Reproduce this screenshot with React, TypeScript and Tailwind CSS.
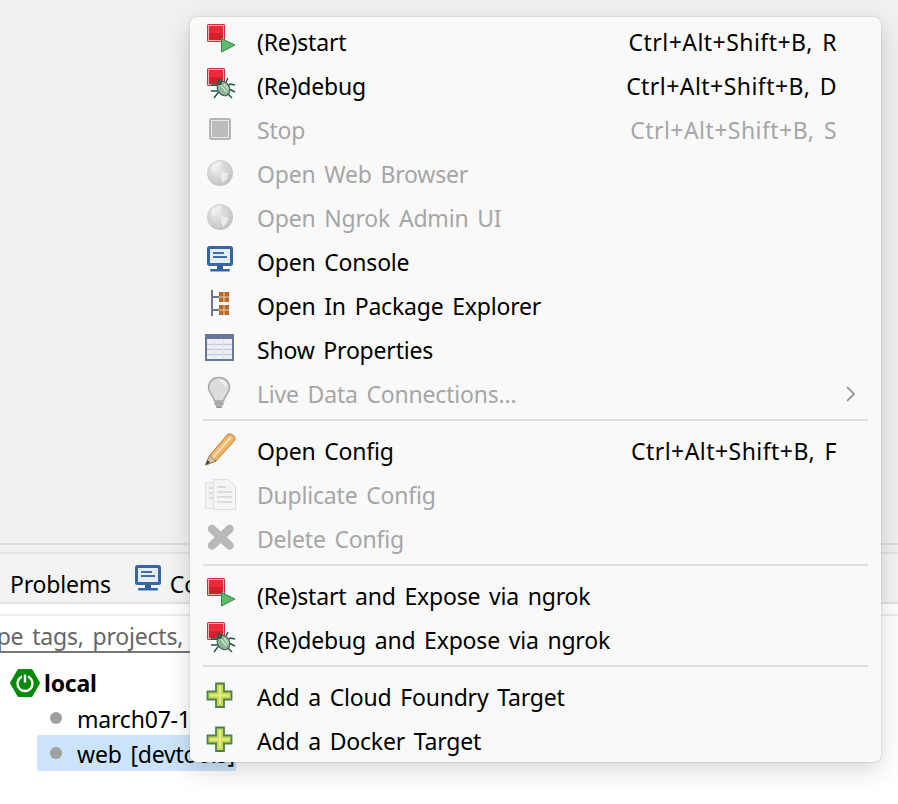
import React from 'react';

const RedSquare = () => (
  <g>
    <rect x="4" y="4" width="18" height="18" rx="1.5" fill="#c8323c" />
    <rect x="5" y="5" width="16" height="16" fill="#f4b0b4" />
    <rect x="6" y="6" width="14" height="14" fill="#ee2a38" />
    <rect x="6" y="13" width="14" height="7" fill="#d2202e" />
  </g>
);

const RestartIcon = () => (
  <svg width="36" height="44" viewBox="0 0 36 44">
    <RedSquare />
    <path d="M18.5 18.5 L32 25 L18.5 32 Z" fill="#62b96b" stroke="#2f8a4a" strokeLinejoin="round" />
  </svg>
);

const DebugIcon = () => (
  <svg width="36" height="44" viewBox="0 0 36 44">
    <RedSquare />
    <g stroke="#23504a" strokeWidth="1.4" fill="none">
      <path d="M15 15 L18 19 M25 14 L23 18" />
      <path d="M8 21 L14 21 L16 23 M8 27 L14 27 L16 25 M11 34 L14 30 L16 28" />
      <path d="M32 21 L27 20 L25 22 M32 28 L28 26 L25 25 M29 34 L26 31 L24 28" />
    </g>
    <ellipse cx="20.5" cy="24.5" rx="6" ry="7.5" transform="rotate(-30 20.5 24.5)" fill="#8fb592" stroke="#2f5f50" />
    <path d="M17.5 21 L23.5 28 M21 20 L25.5 25.5" stroke="#d5e6d2" strokeWidth="1.2" />
    <circle cx="16.5" cy="18.5" r="2.6" fill="#2f5f50" />
  </svg>
);

const StopIcon = () => (
  <svg width="36" height="44" viewBox="0 0 36 44">
    <rect x="6" y="10" width="22" height="22" rx="2.5" fill="#b5b5b5" />
    <rect x="8" y="12" width="18" height="18" rx="1" fill="#e8e8e8" />
    <rect x="9" y="13" width="16" height="16" fill="#bcbcbc" />
  </svg>
);

const GlobeIcon = ({ id }: { id: string }) => (
  <svg width="36" height="44" viewBox="0 0 36 44">
    <defs>
      <radialGradient id={id} cx="0.4" cy="0.35" r="0.75">
        <stop offset="0" stopColor="#ececec" />
        <stop offset="1" stopColor="#bcbcbc" />
      </radialGradient>
    </defs>
    <circle cx="17" cy="21" r="13" fill={`url(#${id})`} />
    <path d="M8 15 C11 10 15 9 19 10 L17 14 L12 15 L13 19 L9 20 Z M18 20 L25 21 L24 27 L20 31 L18 26 Z" fill="#f1f1f1" opacity="0.8" />
  </svg>
);

const ConsoleIcon = () => (
  <svg width="36" height="44" viewBox="0 0 36 44">
    <rect x="4" y="6" width="26" height="20" rx="2.5" fill="#3667a8" />
    <rect x="7" y="9" width="20" height="14" fill="#e6edf4" />
    <rect x="10" y="12" width="11" height="2" fill="#3c6fae" />
    <rect x="10" y="16" width="14" height="2" fill="#3c6fae" />
    <rect x="14" y="26" width="6" height="3" fill="#2f5c98" />
    <rect x="7" y="29" width="20" height="2.5" rx="1" fill="#3667a8" />
  </svg>
);

const PackageIcon = () => (
  <svg width="36" height="44" viewBox="0 0 36 44">
    <path d="M9 6 V32 M9 13 H16 M9 26 H16" stroke="#6b7688" strokeWidth="2" fill="none" />
    <rect x="16" y="8" width="10" height="10" fill="#b5672c" />
    <rect x="16" y="21" width="10" height="10" fill="#b5672c" />
    <path d="M21 8 V18 M16 13 H26 M21 21 V31 M16 26 H26" stroke="#eed3b0" strokeWidth="1" />
  </svg>
);

const TableIcon = () => (
  <svg width="36" height="44" viewBox="0 0 36 44">
    <rect x="3" y="7" width="27" height="25" fill="#eef0f5" stroke="#66789c" strokeWidth="2" />
    <rect x="3" y="7" width="27" height="4" fill="#66789c" />
    <path d="M4 16.5 H29 M4 21.5 H29 M4 26.5 H29" stroke="#c3cad9" strokeWidth="1.5" />
    <path d="M11.5 11 V31 M20.5 11 V31" stroke="#dfe2ea" strokeWidth="1.5" />
  </svg>
);

const BulbIcon = () => (
  <svg width="36" height="44" viewBox="0 0 36 44">
    <path d="M16 5.5 C9.5 5.5 5.5 10 5.5 15.5 C5.5 21 10.5 23.5 11.5 29 H20.5 C21.5 23.5 26.5 21 26.5 15.5 C26.5 10 22.5 5.5 16 5.5 Z" fill="#dcdcdc" stroke="#a8a8a8" strokeWidth="1.5" />
    <path d="M17 8.5 C20 9 22.5 11.5 23 14.5" stroke="#f5f5f5" strokeWidth="2" fill="none" />
    <rect x="11.5" y="29.5" width="9" height="4" rx="1" fill="#a8a8a8" />
    <rect x="13" y="33.5" width="6" height="2.5" rx="1" fill="#9a9a9a" />
  </svg>
);

const PencilIcon = () => (
  <svg width="36" height="44" viewBox="0 0 36 44">
    <path d="M7 26 L25 5 Q28 4.5 30.5 6.5 Q32.5 8.5 32 11 L13 32 L2.5 36 Z" fill="#f0b469" stroke="#bd7a30" />
    <path d="M10 28.5 L28 8" stroke="#fbdca8" strokeWidth="2.5" />
    <path d="M6.5 26.5 L13 32 L2.5 36 Z" fill="#d8c6a8" stroke="#8d7760" strokeWidth="0.8" />
    <path d="M4.5 31 L7 33.5 L2.5 36 Z" fill="#443c36" />
  </svg>
);

const DuplicateIcon = () => (
  <svg width="36" height="44" viewBox="0 0 36 44">
    <rect x="2.5" y="9.5" width="14" height="26" fill="#f3f3f3" stroke="#e2e2e2" />
    <path d="M10.5 6.5 H25 L32.5 13 V36.5 H10.5 Z" fill="#f5f5f5" stroke="#dfdfdf" />
    <path d="M6 15 H10 M6 20 H10 M6 25 H10 M14 14 H23 M14 19 H29 M14 24 H29 M14 29 H29" stroke="#dcdcdc" strokeWidth="2" />
  </svg>
);

const DeleteIcon = () => (
  <svg width="36" height="44" viewBox="0 0 36 44">
    <path d="M9 12 L26.5 28.5 M26.5 12 L9 28.5" stroke="#b9b9b9" strokeWidth="8.5" strokeLinecap="round" />
  </svg>
);

const PlusIcon = () => (
  <svg width="36" height="44" viewBox="0 0 36 44">
    <path d="M13 8.5 H21 V16.5 H28.5 V24.5 H21 V32 H13 V24.5 H4.5 V16.5 H13 Z" fill="#c7d94f" stroke="#4c8054" strokeWidth="1.8" />
    <path d="M17 11 V29 M7 20.5 H26" stroke="#e3ec90" strokeWidth="2" />
  </svg>
);

type Row = {
  icon: React.ReactNode;
  label: string;
  shortcut?: string;
  disabled?: boolean;
  submenu?: boolean;
};

const GROUPS: Row[][] = [
  [
    { icon: <RestartIcon />, label: '(Re)start', shortcut: 'Ctrl+Alt+Shift+B, R' },
    { icon: <DebugIcon />, label: '(Re)debug', shortcut: 'Ctrl+Alt+Shift+B, D' },
    { icon: <StopIcon />, label: 'Stop', shortcut: 'Ctrl+Alt+Shift+B, S', disabled: true },
    { icon: <GlobeIcon id="globe-a" />, label: 'Open Web Browser', disabled: true },
    { icon: <GlobeIcon id="globe-b" />, label: 'Open Ngrok Admin UI', disabled: true },
    { icon: <ConsoleIcon />, label: 'Open Console' },
    { icon: <PackageIcon />, label: 'Open In Package Explorer' },
    { icon: <TableIcon />, label: 'Show Properties' },
    { icon: <BulbIcon />, label: 'Live Data Connections...', disabled: true, submenu: true },
  ],
  [
    { icon: <PencilIcon />, label: 'Open Config', shortcut: 'Ctrl+Alt+Shift+B, F' },
    { icon: <DuplicateIcon />, label: 'Duplicate Config', disabled: true },
    { icon: <DeleteIcon />, label: 'Delete Config', disabled: true },
  ],
  [
    { icon: <RestartIcon />, label: '(Re)start and Expose via ngrok' },
    { icon: <DebugIcon />, label: '(Re)debug and Expose via ngrok' },
  ],
  [
    { icon: <PlusIcon />, label: 'Add a Cloud Foundry Target' },
    { icon: <PlusIcon />, label: 'Add a Docker Target' },
  ],
];

const MenuRow = ({ row }: { row: Row }) => (
  <div className={`flex h-[44px] items-center ${row.disabled ? 'text-[#a6a6a6]' : 'text-black'}`}>
    <div className="ml-[13px] h-[44px] w-[54px] shrink-0">{row.icon}</div>
    <span className="flex-1">{row.label}</span>
    {row.shortcut && <span className="mr-[44px] tracking-[0.45px]">{row.shortcut}</span>}
    {row.submenu && (
      <svg className="mr-[26px]" width="9" height="16" viewBox="0 0 9 16">
        <path d="M1 1 L8 8 L1 15" fill="none" stroke="#8a8a8a" strokeWidth="1.6" />
      </svg>
    )}
  </div>
);

export default function App() {
  return (
    <div className="relative h-[804px] w-[898px] overflow-hidden bg-white text-[23px] leading-none tracking-[-0.2px] [font-family:'Noto_Sans',sans-serif] [word-spacing:3px]">
      {/* view behind the menu */}
      <div className="h-[545px] border-b-2 border-[#dcdcdc] bg-[#f0f0f0]" />
      <div className="h-[7px] bg-[#f0f0f0]" />
      <div className="flex h-[52px] items-center border-y-2 border-[#e2e2e2] bg-[#f3f3f3] pl-[10px] pt-[12px]">
        <span>Problems</span>
        <div className="ml-[20px] h-[44px] w-[36px] shrink-0 -translate-y-[3px]">
          <ConsoleIcon />
        </div>
        <span className="ml-[3px]">Console</span>
      </div>
      <div className="mt-[10px] border-t-2 border-[#ececec]" />
      <div className="flex h-[37px] w-[200px] items-center overflow-hidden whitespace-nowrap border-b-2 border-[#777] pt-[5px] text-[#666]">
        <span className="-ml-[27px]">Type tags, projects, or working state</span>
      </div>
      <div className="flex h-[48px] items-center pl-[8px] pt-[12px] font-bold">
        <svg width="34" height="34" viewBox="0 0 34 34">
          <path d="M10.5 4 H23.5 L31 17 L23.5 30 H10.5 L3 17 Z" fill="#078a07" stroke="#078a07" strokeWidth="2" strokeLinejoin="round" />
          <circle cx="17" cy="17.5" r="7.5" fill="none" stroke="#fff" strokeWidth="2.4" />
          <path d="M17 8 V17" stroke="#078a07" strokeWidth="6" />
          <path d="M17 8.5 V16.5" stroke="#fff" strokeWidth="2.4" />
        </svg>
        <span className="ml-[2px]">local</span>
      </div>
      <div className="flex h-[34px] items-center pl-[50px]">
        <span className="h-[12px] w-[12px] shrink-0 rounded-full bg-[#a0a0a0]" />
        <span className="ml-[15px] pt-[2px]">march07-1</span>
      </div>
      <div className="ml-[37px] flex h-[36px] w-[199px] items-center rounded-[2px] bg-[#cce4fb] pl-[13px]">
        <span className="h-[12px] w-[12px] shrink-0 rounded-full bg-[#a0a0a0]" />
        <span className="ml-[15px] whitespace-nowrap pt-[3px]">web [devtools]</span>
      </div>

      {/* context menu */}
      <div className="absolute left-[190px] top-[17px] h-[745px] w-[691px] rounded-[7px] bg-[#f9f9f9] pt-[3px] shadow-[0_8px_24px_rgba(0,0,0,0.16),0_0_2px_rgba(0,0,0,0.22)]">
        {GROUPS.map((group, i) => (
          <div key={i}>
            {i > 0 && (
              <div className="flex h-[13px] items-start pt-[3px]">
                <div className="mx-[13px] h-[2px] flex-1 bg-[#dedede]" />
              </div>
            )}
            {group.map((row) => (
              <MenuRow key={row.label} row={row} />
            ))}
          </div>
        ))}
      </div>
    </div>
  );
}
